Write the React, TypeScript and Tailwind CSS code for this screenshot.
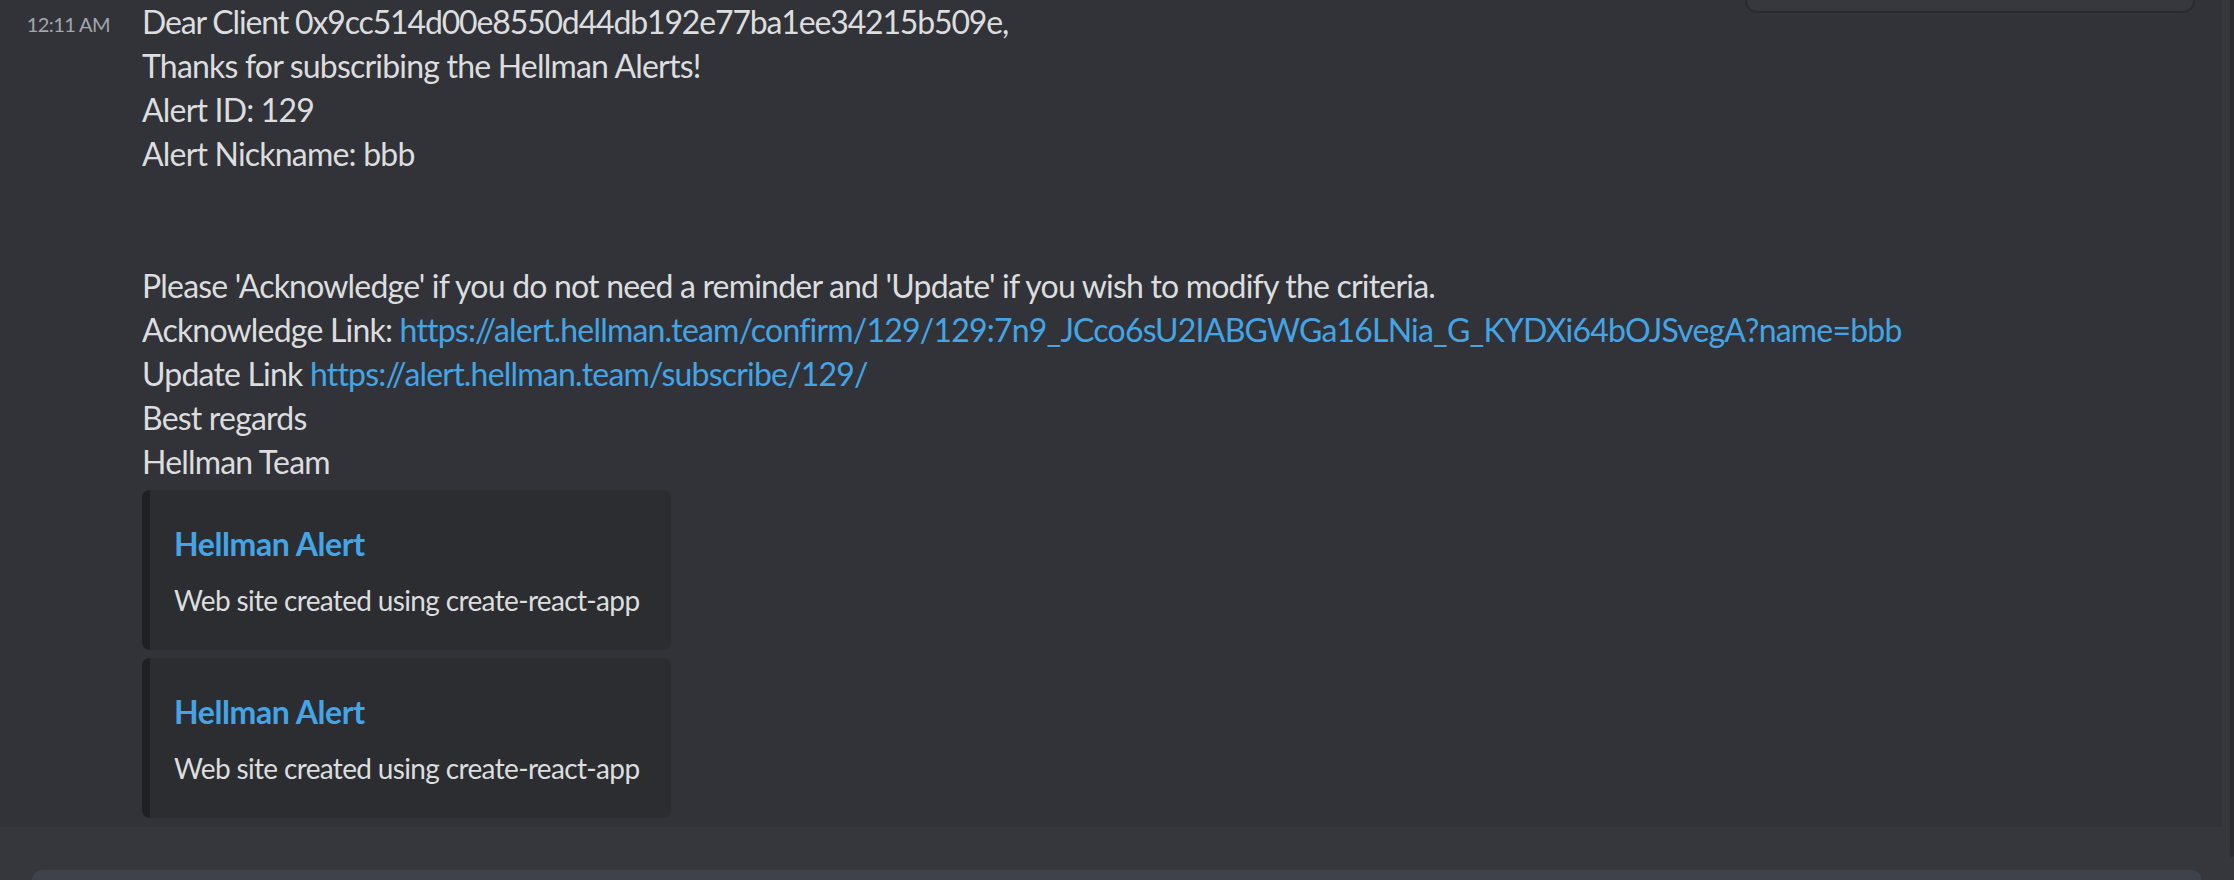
import React from "react";

const lines: React.ReactNode[] = [
  <span className="tracking-[-1.15px]">Dear Client 0x9cc514d00e8550d44db192e77ba1ee34215b509e,</span>,
  "Thanks for subscribing the Hellman Alerts!",
  "Alert ID: 129",
  "Alert Nickname: bbb",
  "",
  "",
  "Please 'Acknowledge' if you do not need a reminder and 'Update' if you wish to modify the criteria.",
  <>
    Acknowledge Link:{" "}
    <span className="text-[#43a5e6]">
      https://alert.hellman.team/confirm/129/129:7n9_JCco6sU2IABGWGa16LNia_G_KYDXi64bOJSvegA?name=bbb
    </span>
  </>,
  <>
    Update Link{" "}
    <span className="text-[#43a5e6]">https://alert.hellman.team/subscribe/129/</span>
  </>,
  "Best regards",
  "Hellman Team",
];

function Embed() {
  return (
    <div className="flex w-fit rounded-[8px] bg-[#2c2d31] overflow-hidden">
      <div className="w-[8px] bg-[#1f2023]" />
      <div className="flex flex-col pt-[32px] pr-[32px] pb-[32px] pl-[24px]">
        <div className="text-[32px] leading-[44px] font-bold tracking-[-0.4px] text-[#43a5e6]">
          Hellman Alert
        </div>
        <div className="mt-[16px] text-[28px] leading-[36px] tracking-[-0.65px] text-[#dcddde]">
          Web site created using create-react-app
        </div>
      </div>
    </div>
  );
}

export default function App() {
  return (
    <div className="relative w-[2234px] h-[880px] overflow-hidden bg-[#36373c] font-['Lato',sans-serif] flex flex-col">
      <div className="flex flex-1 min-h-0">
        <div className="flex-1 flex flex-col">
          <div className="flex bg-[#323338] pb-[9px]">
            <div className="w-[110px] shrink-0 text-right pt-[2px] text-[20px] leading-[44px] tracking-[-0.6px] text-[#a3a6aa]">
              12:11 AM
            </div>
            <div className="ml-[32px] flex flex-col">
              <div className="text-[32px] leading-[44px] tracking-[-0.8px] text-[#dcddde] whitespace-pre">
                {lines.map((l, i) => (
                  <div key={i} className="h-[44px]">
                    {l}
                  </div>
                ))}
              </div>
              <div className="mt-[6px] flex flex-col gap-[8px]">
                <Embed />
                <Embed />
              </div>
            </div>
          </div>
        </div>
        <div className="w-[12px] flex">
          <div className="w-[8px] bg-[#36373c]" />
          <div className="w-[4px] h-[857px] bg-[#2b2c30] rounded-b-[4px]" />
        </div>
      </div>
      <div className="h-[10px] mx-[32px] bg-[#404249] rounded-t-[16px]" />
      <div className="absolute top-0 left-[1745px] w-[450px] h-[13px] bg-[#37383d] border-x-2 border-b-2 border-[#2a2b2f] rounded-b-[12px]" />
    </div>
  );
}
